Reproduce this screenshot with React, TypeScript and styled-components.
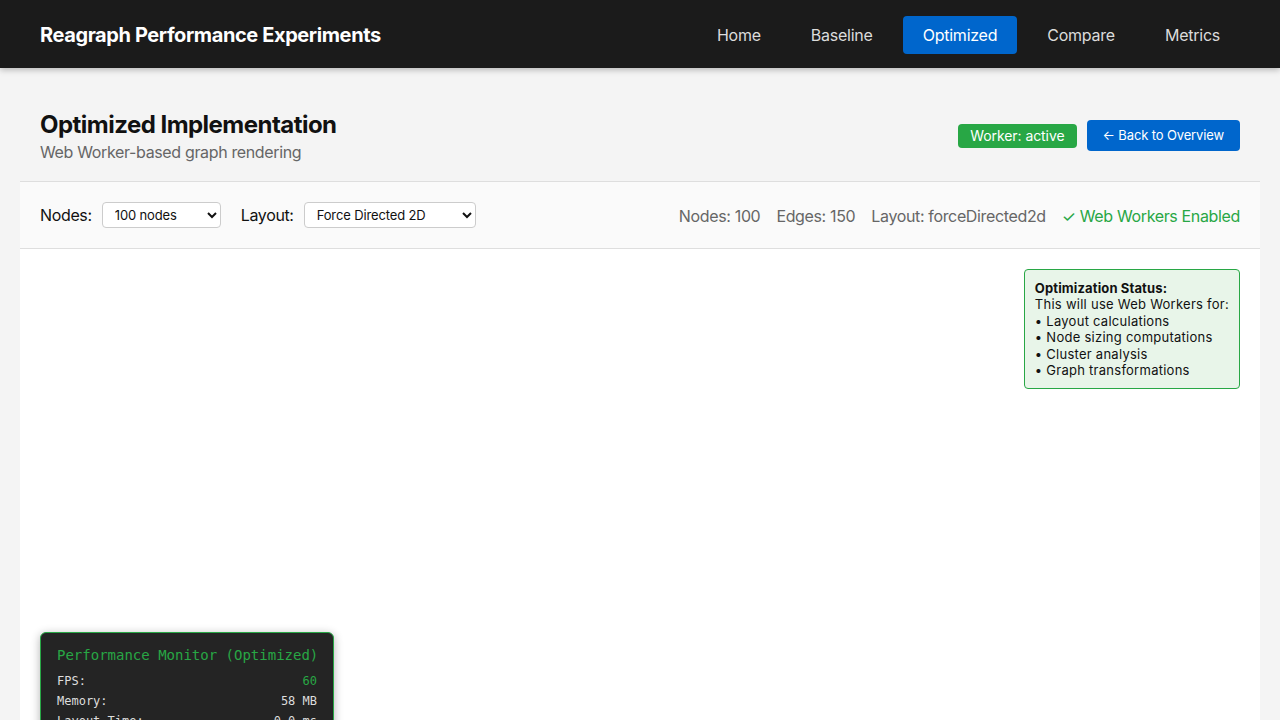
import React from 'react';
import styled, { createGlobalStyle } from 'styled-components';

const GlobalStyle = createGlobalStyle`
  html, body {
    margin: 0;
    padding: 0;
    background: #f4f4f4;
    font-family: Inter, "Liberation Sans", Arial, sans-serif;
    overflow: hidden;
  }
  * { box-sizing: border-box; }
`;

const Header = styled.header`
  height: 68px;
  background: #1b1b1b;
  display: flex;
  align-items: center;
  justify-content: space-between;
  padding: 1px 40px 0;
  box-shadow: 0 2px 6px rgba(0, 0, 0, 0.25);
  position: relative;
  z-index: 2;
`;

const Brand = styled.h1`
  margin: 0;
  font-size: 20px;
  font-weight: 700;
  letter-spacing: -0.02em;
  color: #fff;
`;

const Nav = styled.nav`
  display: flex;
  gap: 10px;
`;

const NavItem = styled.a<{ $active?: boolean }>`
  display: block;
  padding: 9px 20px;
  line-height: 20px;
  font-size: 16px;
  letter-spacing: -0.015em;
  border-radius: 4px;
  color: ${p => (p.$active ? '#fff' : '#dcdcdc')};
  background: ${p => (p.$active ? '#0066cc' : 'transparent')};
  text-decoration: none;
`;

const Container = styled.main`
  margin: 0 20px;
`;

const PageHead = styled.section`
  display: flex;
  align-items: flex-start;
  justify-content: space-between;
  padding: 42px 20px 19px;
  border-bottom: 1px solid #dedede;
`;

const Title = styled.h2`
  margin: 0 0 4px;
  font-size: 24px;
  line-height: 29px;
  font-weight: 700;
  letter-spacing: -0.022em;
  color: #111;
`;

const Subtitle = styled.p`
  margin: 0;
  font-size: 16px;
  line-height: 19px;
  letter-spacing: -0.022em;
  color: #666;
`;

const HeadActions = styled.div`
  display: flex;
  align-items: center;
  gap: 10px;
  margin-top: 10px;
`;

const Badge = styled.span`
  background: #28a745;
  color: #fff;
  font-size: 14px;
  line-height: 16px;
  padding: 4px 12px;
  border-radius: 4px;
  letter-spacing: -0.005em;
`;

const BackButton = styled.button`
  background: #0066cc;
  color: #fff;
  border: none;
  border-radius: 4px;
  font-family: inherit;
  font-size: 13px;
  line-height: 15px;
  letter-spacing: -0.01em;
  padding: 8px 16px;
`;

const Toolbar = styled.section`
  display: flex;
  align-items: center;
  justify-content: space-between;
  background: #fafafa;
  padding: 20px;
  border-bottom: 1px solid #dedede;
`;

const Controls = styled.div`
  display: flex;
  align-items: center;
  gap: 20px;
`;

const Field = styled.label`
  display: flex;
  align-items: center;
  gap: 10px;
  font-size: 16px;
  letter-spacing: -0.022em;
  color: #111;
`;

const Select = styled.select<{ $w: number }>`
  width: ${p => p.$w}px;
  height: 26px;
  font-family: inherit;
  font-size: 13px;
  letter-spacing: -0.01em;
  padding: 0 8px;
  border: 1px solid #ccc;
  border-radius: 4px;
  background: #fff;
  color: #111;
`;

const Stats = styled.div`
  display: flex;
  gap: 16px;
  font-size: 16px;
  letter-spacing: -0.022em;
  color: #666;
  padding-top: 2px;
`;

const Enabled = styled.span`
  color: #28a745;
`;

const Canvas = styled.section`
  position: relative;
  height: 620px;
  background: #fff;
`;

const StatusBox = styled.div`
  position: absolute;
  top: 20px;
  right: 20px;
  background: #e8f5e9;
  border: 1px solid #28a745;
  border-radius: 4px;
  padding: 10px;
  font-size: 13px;
  line-height: 16.4px;
  letter-spacing: 0.02em;
  color: #111;

  strong { display: block; letter-spacing: 0.01em; }
`;

const Monitor = styled.div`
  position: absolute;
  top: 383px;
  left: 20px;
  width: 294px;
  background: #242424;
  border: 1px solid #28a745;
  border-radius: 6px;
  padding: 14px 16px 12px;
  font-family: "DejaVu Sans Mono", "Liberation Mono", monospace;
  box-shadow: 0 2px 10px rgba(0, 0, 0, 0.3);
`;

const MonitorTitle = styled.div`
  color: #28a745;
  font-size: 14px;
  line-height: 17px;
  margin-bottom: 7px;
  white-space: nowrap;
`;

const MonitorRow = styled.div<{ $accent?: boolean }>`
  display: flex;
  justify-content: space-between;
  font-size: 12px;
  line-height: 20px;
  color: #ddd;

  span:last-child {
    color: ${p => (p.$accent ? '#28a745' : '#ddd')};
  }
`;

const navItems = ['Home', 'Baseline', 'Optimized', 'Compare', 'Metrics'];

const rows: [string, string, boolean?][] = [
  ['FPS:', '60', true],
  ['Memory:', '58 MB'],
  ['Layout Time:', '0.0 ms'],
  ['Render Time:', '0.0 ms'],
  ['Worker Tasks:', '0'],
];

export default function App() {
  return (
    <>
      <GlobalStyle />
      <Header>
        <Brand>Reagraph Performance Experiments</Brand>
        <Nav>
          {navItems.map(n => (
            <NavItem key={n} href="#" $active={n === 'Optimized'}>
              {n}
            </NavItem>
          ))}
        </Nav>
      </Header>

      <Container>
        <PageHead>
          <div>
            <Title>Optimized Implementation</Title>
            <Subtitle>Web Worker-based graph rendering</Subtitle>
          </div>
          <HeadActions>
            <Badge>Worker: active</Badge>
            <BackButton>← Back to Overview</BackButton>
          </HeadActions>
        </PageHead>

        <Toolbar>
          <Controls>
            <Field>
              Nodes:
              <Select $w={119} defaultValue="100">
                <option value="100">100 nodes</option>
                <option value="500">500 nodes</option>
                <option value="1000">1000 nodes</option>
              </Select>
            </Field>
            <Field>
              Layout:
              <Select $w={172} defaultValue="fd2d">
                <option value="fd2d">Force Directed 2D</option>
                <option value="circular">Circular 2D</option>
              </Select>
            </Field>
          </Controls>
          <Stats>
            <span>Nodes: 100</span>
            <span>Edges: 150</span>
            <span>Layout: forceDirected2d</span>
            <Enabled>✓ Web Workers Enabled</Enabled>
          </Stats>
        </Toolbar>

        <Canvas>
          <StatusBox>
            <strong>Optimization Status:</strong>
            This will use Web Workers for:
            <br />• Layout calculations
            <br />• Node sizing computations
            <br />• Cluster analysis
            <br />• Graph transformations
          </StatusBox>

          <Monitor>
            <MonitorTitle>Performance Monitor (Optimized)</MonitorTitle>
            {rows.map(([k, v, a]) => (
              <MonitorRow key={k} $accent={a}>
                <span>{k}</span>
                <span>{v}</span>
              </MonitorRow>
            ))}
          </Monitor>
        </Canvas>
      </Container>
    </>
  );
}
